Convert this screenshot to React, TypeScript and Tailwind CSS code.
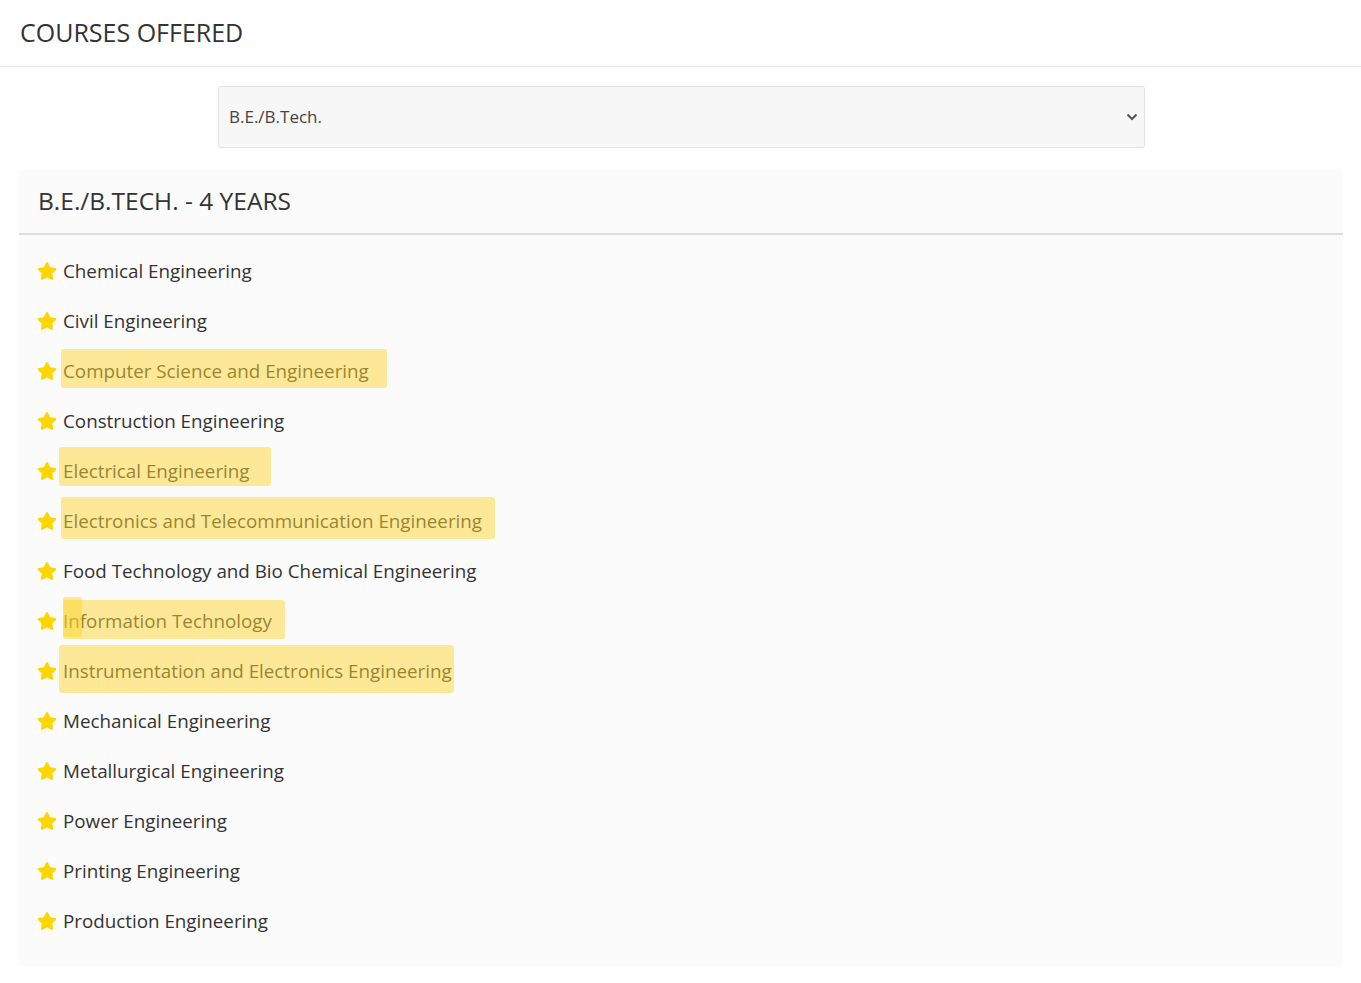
import { FaStar } from "react-icons/fa";

type Mark = { left: number; top: number; width: number; height: number };

interface Course {
  name: string;
  marks?: Mark[];
}

// highlighter strokes, offsets measured from the row's top-left text corner
const courses: Course[] = [
  { name: "Chemical Engineering" },
  { name: "Civil Engineering" },
  { name: "Computer Science and Engineering", marks: [{ left: -2, top: 5, width: 326, height: 39 }] },
  { name: "Construction Engineering" },
  { name: "Electrical Engineering", marks: [{ left: -4, top: 3, width: 212, height: 39 }] },
  { name: "Electronics and Telecommunication Engineering", marks: [{ left: -2, top: 3, width: 434, height: 42 }] },
  { name: "Food Technology and Bio Chemical Engineering" },
  {
    name: "Information Technology",
    marks: [
      { left: 0, top: 6, width: 222, height: 39 },
      { left: 0, top: 3, width: 19, height: 40 },
    ],
  },
  { name: "Instrumentation and Electronics Engineering", marks: [{ left: -4, top: 1, width: 395, height: 48 }] },
  { name: "Mechanical Engineering" },
  { name: "Metallurgical Engineering" },
  { name: "Power Engineering" },
  { name: "Printing Engineering" },
  { name: "Production Engineering" },
];

function CourseRow({ course }: { course: Course }) {
  return (
    <li className="relative flex h-[50px] items-center">
      <FaStar className="-ml-px mr-[6px] h-[20px] w-[20px] shrink-0 text-[#fdd600]" />
      <span className="relative text-[18.8px] text-[#333]">
        {course.name}
        {course.marks?.map((m, i) => (
          <span
            key={i}
            className="pointer-events-none absolute rounded-[3px] bg-[#fdd632]/50"
            style={{ left: m.left, top: m.top - 13, width: m.width, height: m.height }}
          />
        ))}
      </span>
    </li>
  );
}

export default function App() {
  return (
    <div className="min-h-screen bg-white font-['Open_Sans',sans-serif] text-[#333]">
      <div className="flex h-[67px] items-center border-b border-[#e6e6e6] px-5">
        <h1 className="text-[25px] font-normal text-[#333]">COURSES OFFERED</h1>
      </div>

      <div className="pt-[19px]">
        <div className="mx-auto flex h-[62px] w-[927px] translate-x-px items-center justify-between rounded-[3px] border border-[#e3e3e3] bg-[#f7f7f7] pl-[10px] pr-[6px]">
          <span className="text-[17px] text-[#444]">B.E./B.Tech.</span>
          <svg width="12" height="8" viewBox="0 0 12 8" fill="none">
            <path d="M1.5 1.5 6 6l4.5-4.5" stroke="#555" strokeWidth="2" />
          </svg>
        </div>
      </div>

      <div className="mb-5 ml-[19px] mr-[18px] mt-[22px] bg-[#fbfbfb]">
        <div className="flex h-[65px] items-center border-b-2 border-[#dedede] px-[19px]">
          <h2 className="text-[24.5px] font-normal text-[#333]">B.E./B.TECH. - 4 YEARS</h2>
        </div>
        <ul className="px-[19px] pb-5 pt-[11px]">
          {courses.map((c) => (
            <CourseRow key={c.name} course={c} />
          ))}
        </ul>
      </div>
    </div>
  );
}
